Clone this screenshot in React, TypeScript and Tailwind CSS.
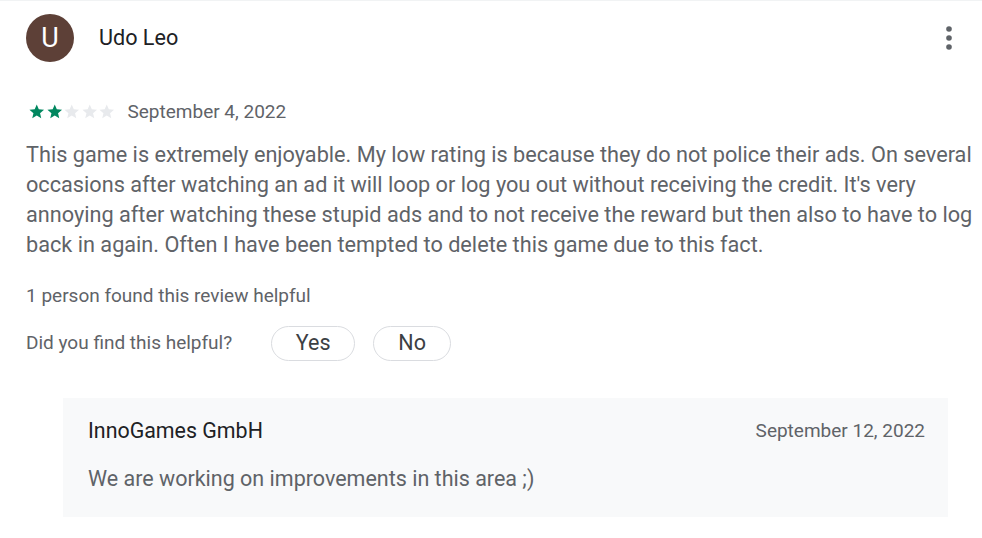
function Star({ filled }: { filled: boolean }) {
  return (
    <svg viewBox="0 0 24 24" className="h-[17.5px] w-[17.5px]">
      <path
        d="M12 17.27L18.18 21l-1.64-7.03L22 9.24l-7.19-.61L12 2 9.19 8.63 2 9.24l5.46 4.73L5.82 21z"
        fill={filled ? '#01875f' : '#e8eaed'}
      />
    </svg>
  );
}

function Kebab() {
  return (
    <svg viewBox="0 0 8 26" className="h-[26px] w-[8px]" fill="#5f6368">
      <circle cx="4" cy="4" r="2.8" />
      <circle cx="4" cy="13" r="2.8" />
      <circle cx="4" cy="22" r="2.8" />
    </svg>
  );
}

export default function App() {
  const rating = 2;

  return (
    <div className="min-h-[538px] w-[982px] bg-white border-t border-[#f1f3f4] font-['Roboto',sans-serif]">
      <div className="pl-[26px] pr-[10px]">
        <header className="flex h-[74px] items-center">
          <div className="flex h-12 w-12 items-center justify-center rounded-full bg-[#5d4037] text-[27px] text-white">
            U
          </div>
          <span className="ml-[25px] text-[21.6px] text-[#202124]">Udo Leo</span>
          <button className="ml-auto mr-[19px] flex items-center justify-center">
            <Kebab />
          </button>
        </header>

        <div className="mt-[27px] flex h-[20px] items-center">
          <div className="ml-[2px] flex">
            {[1, 2, 3, 4, 5].map((i) => (
              <Star key={i} filled={i <= rating} />
            ))}
          </div>
          <span className="ml-[12px] text-[19px] text-[#5f6368]">September 4, 2022</span>
        </div>

        <p className="-mr-[8px] mt-[18px] text-[21.7px] leading-[30px] text-[#5f6368]">
          This game is extremely enjoyable. My low rating is because they do not police their ads. On several
          occasions after watching an ad it will loop or log you out without receiving the credit. It's very
          annoying after watching these stupid ads and to not receive the reward but then also to have to log
          back in again. Often I have been tempted to delete this game due to this fact.
        </p>

        <p className="mt-[24px] text-[19px] leading-[24px] text-[#5f6368]">1 person found this review helpful</p>

        <div className="mt-[18px] flex h-[35px] items-center">
          <span className="text-[19px] text-[#5f6368]">Did you find this helpful?</span>
          <button className="ml-[39px] h-[35px] w-[84px] rounded-full border border-[#dadce0] text-[21.5px] text-[#3c4043]">
            Yes
          </button>
          <button className="ml-[18px] h-[35px] w-[78px] rounded-full border border-[#dadce0] text-[21.5px] text-[#3c4043]">
            No
          </button>
        </div>

        <div className="ml-[37px] mr-[24px] mt-[37px] bg-[#f8f9fa] pl-[25px] pr-[23px] pt-[19px] pb-[24px]">
          <div className="flex h-[28px] items-center justify-between">
            <span className="text-[21.4px] text-[#202124]">InnoGames GmbH</span>
            <span className="text-[19px] text-[#5f6368]">September 12, 2022</span>
          </div>
          <p className="mt-[20px] text-[21.5px] leading-[28px] text-[#5f6368]">
            We are working on improvements in this area ;)
          </p>
        </div>
      </div>
    </div>
  );
}
